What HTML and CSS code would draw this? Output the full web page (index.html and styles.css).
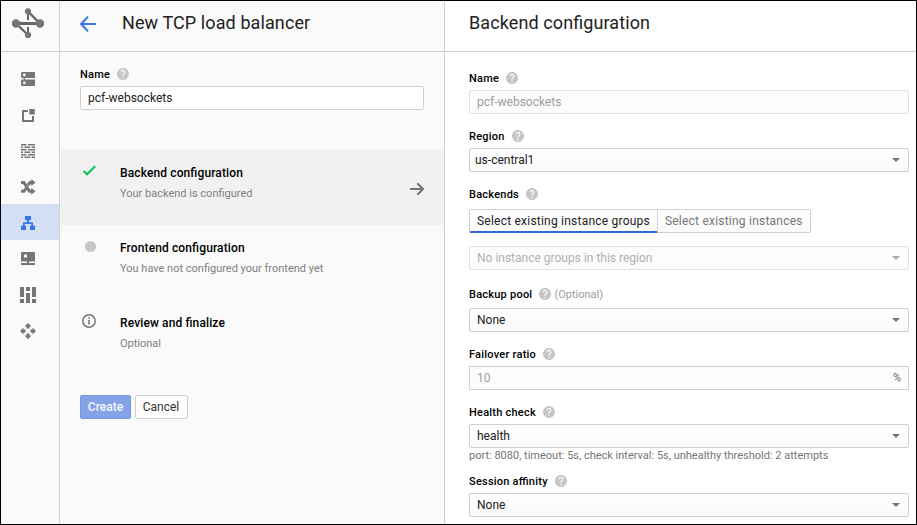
FILE: index.html
```html
<!DOCTYPE html>
<html lang="en">
<head>
<meta charset="utf-8">
<title>New TCP load balancer</title>
<link rel="stylesheet" href="styles.css">
</head>
<body>
<svg class="sprite" aria-hidden="true">
  <symbol id="help" viewBox="2 2 20 20"><path d="M12 2C6.48 2 2 6.48 2 12s4.48 10 10 10 10-4.48 10-10S17.52 2 12 2zm1 17h-2v-2h2v2zm2.07-7.75l-.9.92C13.45 12.9 13 13.5 13 15h-2v-.5c0-1.1.45-2.1 1.17-2.83l1.24-1.26c.37-.36.59-.86.59-1.41 0-1.1-.9-2-2-2s-2 .9-2 2H8c0-2.21 1.79-4 4-4s4 1.79 4 4c0 .88-.36 1.68-.93 2.25z"/></symbol>
</svg>
<div class="app">
  <nav class="rail">
    <div class="logo">
      <svg width="32" height="32" viewBox="12 8 32 32">
        <g stroke="#666" fill="none"><path stroke-width="3" d="M16 23.500h24"/><path stroke-width="2.400" d="M28 11.500L40 23.500M16 23.500L28 35"/><path stroke-width="2" d="M28 12v8M28 27v8"/></g>
        <g fill="#757575"><circle cx="28" cy="11.300" r="3.100"/><circle cx="16" cy="23.500" r="4.200"/><circle cx="40" cy="23.500" r="4.200"/><circle cx="28" cy="35" r="3.100"/></g>
      </svg>
    </div>
    <div class="rail-items">
      <a class="rail-item"><svg viewBox="0 0 18 18"><path fill-rule="evenodd" d="M3 2h12.500q.5 0 .5.500v5q0 .5-.5.500H3q-1 0-1-1V3q0-1 1-1zM5.300 3.600a1.400 1.400 0 1 0 0 2.800a1.400 1.400 0 1 0 0-2.800zM3 9.500h12.500q.5 0 .5.500v5.500q0 .5-.5.500H3q-1 0-1-1v-4.500q0-1 1-1zM5.300 11.400a1.400 1.400 0 1 0 0 2.800a1.400 1.400 0 1 0 0-2.800z"/><path d="M4.600 7.500h1.400v2.500H4.600z"/></svg></a>
      <a class="rail-item"><svg viewBox="0 0 18 18"><path d="M3 4h6v2H5v8h8v-4h2v6H3z"/><path d="M10.300 3h5.500v5.500h-5.500z"/></svg></a>
      <a class="rail-item"><svg viewBox="0 0 18 18"><path d="M2 2h5.500v1.600H2zM9 2h7v1.600H9zM2 4.500h2v1.600H2zM5.400 4.500h5.800v1.600H5.400zM12.600 4.500H16v1.600h-3.400zM2 7h5.500v1.600H2zM9 7h7v1.600H9zM2 9.500h2v1.600H2zM5.400 9.500h5.800v1.600H5.400zM12.600 9.500H16v1.600h-3.400zM2 12h5.500v1.600H2zM9 12h7v1.600H9zM2 14.500h2v1.600H2zM5.400 14.500h5.800v1.600H5.400zM12.600 14.500H16v1.600h-3.400z"/></svg></a>
      <a class="rail-item"><svg viewBox="0 0 18 18"><g fill="none" stroke="#757575" stroke-width="3"><path d="M2 4.500h2.800L10.500 13.200h3M2 13.200h2.800L7 10.600M8.800 7.300L11 4.500h2.500"/></g><path d="M12.300 1L16.500 4.500l-4.200 3.500zM12.300 9.700l4.200 3.500-4.200 3.500z"/></svg></a>
      <a class="rail-item active"><svg viewBox="0 0 18 18"><path d="M6 2h6v4.300h-2v1.900h4v3.200h2V16h-5v-4.600h1.300V9.900H5.700v1.500H7V16H2v-4.600h2V8.200h4V6.300H6z"/></svg></a>
      <a class="rail-item"><svg viewBox="0 0 18 18"><path fill-rule="evenodd" d="M3 2h12q1 0 1 1v8q0 .5-.5.500H10V13h6v1.900H2V13h6v-1.500H2.500Q2 11.500 2 11V3q0-1 1-1zM5 4.500v3h3v-3z"/></svg></a>
      <a class="rail-item"><svg viewBox="0 0 18 18"><path d="M1 1h4v10H1zM1 13h4v4H1zM7 1h4v4H7zM7 7h4v10H7zM13 1h4v10h-4zM13 13h4v4h-4z"/></svg></a>
      <a class="rail-item"><svg viewBox="0 0 18 18"><path d="M9 1l3.500 3.500H10.500V6.500h-3V4.500H5.500zM9 17l3.500-3.500H10.500V11.500h-3v2H5.500zM1 9l3.500-3.500v2h2v3h-2v2zM17 9l-3.500-3.500v2h-2v3h2v2z"/></svg></a>
    </div>
  </nav>

  <section class="steps">
    <header class="head">
      <svg class="back" width="16" height="16" viewBox="0 0 16 16"><path d="M16 8H1.500M8 .8L1 8l7 7.200"/></svg>
      <h1 class="title">New TCP load balancer</h1>
    </header>
    <div class="name-block">
      <div class="label"><span>Name</span><svg class="help"><use href="#help"/></svg></div>
      <div class="box">pcf-websockets</div>
    </div>
    <div class="step selected">
      <div class="mark"><svg width="14" height="12" viewBox="0 0 14 12"><path class="check" d="M1.600 6l3.500 3.300L13.200 1.300"/></svg></div>
      <div class="step-text"><h2 class="step-title">Backend configuration</h2><p class="step-sub">Your backend is configured</p></div>
      <svg class="go" width="14" height="14" viewBox="0 0 14 14"><path d="M0 7h13M7.300 1.200L13 7l-5.700 5.800"/></svg>
    </div>
    <div class="step">
      <div class="mark"><span class="dot"></span></div>
      <div class="step-text"><h2 class="step-title">Frontend configuration</h2><p class="step-sub">You have not configured your frontend yet</p></div>
    </div>
    <div class="step">
      <div class="mark"><svg class="info" width="14" height="14" viewBox="0 0 14 14"><circle cx="7" cy="7" r="6.200" fill="none" stroke="#757575" stroke-width="1.500"/><path fill="#757575" d="M6.200 3.200h1.600v1.600H6.200zM6.200 6h1.600v4.500H6.200z"/></svg></div>
      <div class="step-text"><h2 class="step-title">Review and finalize</h2><p class="step-sub">Optional</p></div>
    </div>
    <div class="actions"><button class="btn primary">Create</button><button class="btn">Cancel</button></div>
  </section>

  <section class="config">
    <header class="head"><h1 class="title">Backend configuration</h1></header>
    <div class="form">
      <div class="field"><div class="label"><span>Name</span><svg class="help"><use href="#help"/></svg></div>
        <div class="box disabled">pcf-websockets</div></div>
      <div class="field"><div class="label"><span>Region</span><svg class="help"><use href="#help"/></svg></div>
        <div class="box select region">us-central1<i class="caret"></i></div></div>
      <div class="field backends"><div class="label"><span>Backends</span><svg class="help"><use href="#help"/></svg></div>
        <div class="tabs"><div class="tab on">Select existing instance groups</div><div class="tab">Select existing instances</div></div>
        <div class="box select disabled">No instance groups in this region<i class="caret"></i></div></div>
      <div class="field backup"><div class="label"><span>Backup pool</span><svg class="help"><use href="#help"/></svg><span class="optional">(Optional)</span></div>
        <div class="box select">None<i class="caret"></i></div></div>
      <div class="field"><div class="label"><span>Failover ratio</span><svg class="help"><use href="#help"/></svg></div>
        <div class="box ratio"><span class="placeholder">10</span><span class="unit">%</span></div></div>
      <div class="field health"><div class="label"><span>Health check</span><svg class="help"><use href="#help"/></svg></div>
        <div class="box select">health<i class="caret"></i></div>
        <p class="hint">port: 8080, timeout: 5s, check interval: 5s, unhealthy threshold: 2 attempts</p></div>
      <div class="field"><div class="label"><span>Session affinity</span><svg class="help"><use href="#help"/></svg></div>
        <div class="box select">None<i class="caret"></i></div></div>
    </div>
  </section>
</div>
</body>
</html>
```
FILE: styles.css
```css
* { box-sizing: border-box; }
body { margin: 0; font: 12px/16px Roboto, "Liberation Sans", sans-serif; font-feature-settings: "liga" 1; color: #212121; }
h1, h2, p { margin: 0; }
.sprite { display: none; }
.app { display: flex; width: 917px; height: 525px; border: 1px solid #000; background: #fff; overflow: hidden; }

.rail { width: 59px; flex: none; background: #fafafa; border-right: 1px solid #d0d0d0; }
.logo { height: 51px; padding: 7px 0 0 11px; border-bottom: 1px solid #d0d0d0; }
.logo svg { display: block; }
.rail-items { padding-top: 8px; }
.rail-item { display: block; height: 36px; padding: 10px 0 0 18px; }
.rail-item svg { display: block; width: 18px; height: 18px; fill: #757575; }
.rail-item.active { background: #d4dff6; }
.rail-item.active svg { fill: #3b78e7; }

.steps { width: 385px; flex: none; background: #fafafa; border-right: 1px solid #d0d0d0; }
.head { display: flex; height: 51px; padding-top: 10px; border-bottom: 1px solid #d0d0d0; }
.title { font-size: 18px; line-height: 24px; font-weight: 400; letter-spacing: 0.1px; color: #212121; }
.back { margin: 5px 26px 0 20px; fill: none; stroke: #3b78e7; stroke-width: 2; }
.name-block { height: 98px; padding: 14px 20px 0; }
.label { display: flex; align-items: center; height: 16px; margin-bottom: 4px; font-size: 11px; font-weight: 500; letter-spacing: 0.23px; color: #000; white-space: nowrap; }
.label span { padding-top: 2px; }
.help { width: 12px; height: 12px; margin-left: 7px; fill: #c6c6c6; }
.label .optional { margin-left: 3px; font-weight: 400; letter-spacing: 0; color: #9e9e9e; }
.box { display: flex; align-items: center; height: 24px; padding: 0 7px; border: 1px solid #d0d0d0; border-radius: 2px; background: #fff; white-space: nowrap; }

.step { display: flex; height: 75px; padding-top: 15px; }
.step.selected { background: #f1f1f1; }
.mark { display: flex; flex: none; width: 60px; padding-left: 22px; }
.mark svg { display: block; }
.mark .info { margin-top: -1px; }
.check { fill: none; stroke: #0fc357; stroke-width: 2.2; }
.dot { width: 11px; height: 11px; margin: 1px 0 0 2.5px; border-radius: 50%; background: #c6c6c6; }
.step-text { flex: 1; }
.step-title { font-size: 12px; line-height: 16px; font-weight: 500; letter-spacing: 0.12px; color: #000; }
.step-sub { margin-top: 5px; font-size: 11px; line-height: 16px; color: #808080; }
.go { margin: 17px 20px 0 0; fill: none; stroke: #757575; stroke-width: 2; }
.actions { display: flex; gap: 4px; padding: 20px 20px 0; }
.btn { width: 53px; height: 24px; padding: 0 1px 0 0; border: 1px solid #d0d0d0; border-radius: 2px; background: #fff; font: 12px/22px Roboto, sans-serif; color: #333; }
.btn.primary { width: 51px; padding: 0; border-color: #6f97e3; background: #84a3e6; color: #f4f7fd; font-weight: 500; }

.config { flex: 1; }
.config .head { padding-left: 24px; }
.form { padding: 18px 7px 0 24px; }
.field { height: 58px; }
.select { background: linear-gradient(#fff, #f9f9f9); }
.region { padding-left: 5px; }
.caret { margin-left: auto; margin-right: 1px; border: 4px solid transparent; border-top-color: #757575; border-bottom: 0; }
.disabled { border-color: #e2e2e2; background: #fcfcfc; color: #9e9e9e; }
.select.disabled { color: #b0b0b0; }
.disabled .caret { border-top-color: #aaa; }
.backends { height: 100px; }
.backends .label { margin-bottom: 7px; }
.tabs { display: flex; height: 24px; margin-bottom: 13px; }
.tab { height: 24px; padding: 0 7px; border: 1px solid #d0d0d0; border-left: 0; border-radius: 0 2px 2px 0; background: linear-gradient(#fff, #fafafa); line-height: 22px; letter-spacing: 0.22px; color: #757575; white-space: nowrap; }
.tab.on { border-left: 1px solid #d0d0d0; border-radius: 2px 0 0 2px; box-shadow: inset 0 -1px #3367d6; border-bottom-color: #3367d6; color: #212121; }
.backup { height: 60px; }
.backup .label { margin-bottom: 6px; }
.ratio { justify-content: space-between; border-radius: 0; background: #fcfcfc; }
.placeholder { color: #9e9e9e; }
.unit { font-size: 11px; color: #616161; }
.health { height: 69px; }
.hint { font-size: 11px; line-height: 16px; color: #757575; white-space: nowrap; }
```
